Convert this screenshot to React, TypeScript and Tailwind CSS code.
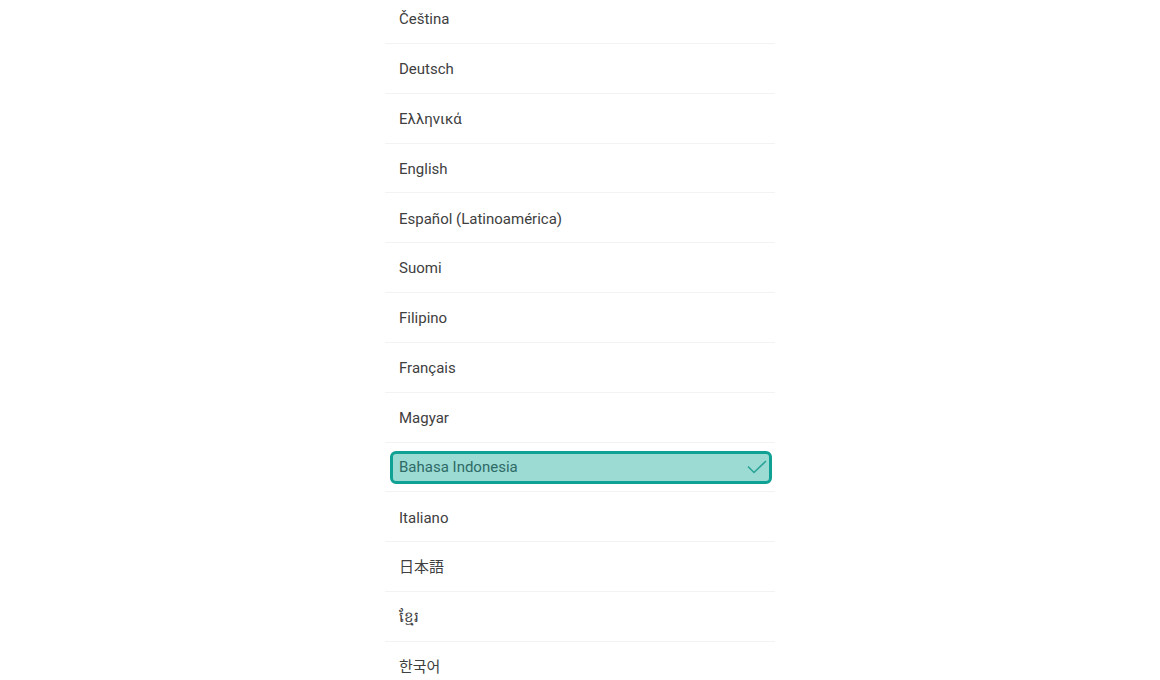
import React from 'react';

const languages = [
  'Čeština',
  'Deutsch',
  'Ελληνικά',
  'English',
  'Español (Latinoamérica)',
  'Suomi',
  'Filipino',
  'Français',
  'Magyar',
  'Bahasa Indonesia',
  'Italiano',
  '日本語',
  'ខ្មែរ',
  '한국어',
];

const selected = 'Bahasa Indonesia';

const App: React.FC = () => {
  return (
    <div
      className="h-[680px] w-full overflow-hidden bg-white"
      style={{ fontFamily: 'Roboto, "Noto Sans", "Noto Sans CJK JP", "Noto Sans CJK KR", sans-serif' }}
    >
      <ul className="mx-auto -mt-[6px] w-[390px]">
        {languages.map((lang) => {
          const isSelected = lang === selected;
          return (
            <li key={lang} className="flex h-[49.85px] flex-col border-b border-[#f3f3f3]">
              {isSelected ? (
                <div className="ml-[5px] mr-[3px] mt-[8px] flex h-[33px] items-center justify-between rounded-[6px] border-[3px] border-[#0fa194] bg-[#9cdad4] pl-[6px] pr-[2px]">
                  <span className="text-[15px] text-[#2e6b66]">{lang}</span>
                  <svg width="20" height="14" viewBox="0 0 20 14" fill="none">
                    <path d="M1 6.5 L7 12.5 L19 1" stroke="#2aa396" strokeWidth="1.6" />
                  </svg>
                </div>
              ) : (
                <div className="flex h-full items-center pl-[14px] pt-[2px]">
                  <span className="text-[15px] text-[#404040]">{lang}</span>
                </div>
              )}
            </li>
          );
        })}
      </ul>
    </div>
  );
};

export default App;
